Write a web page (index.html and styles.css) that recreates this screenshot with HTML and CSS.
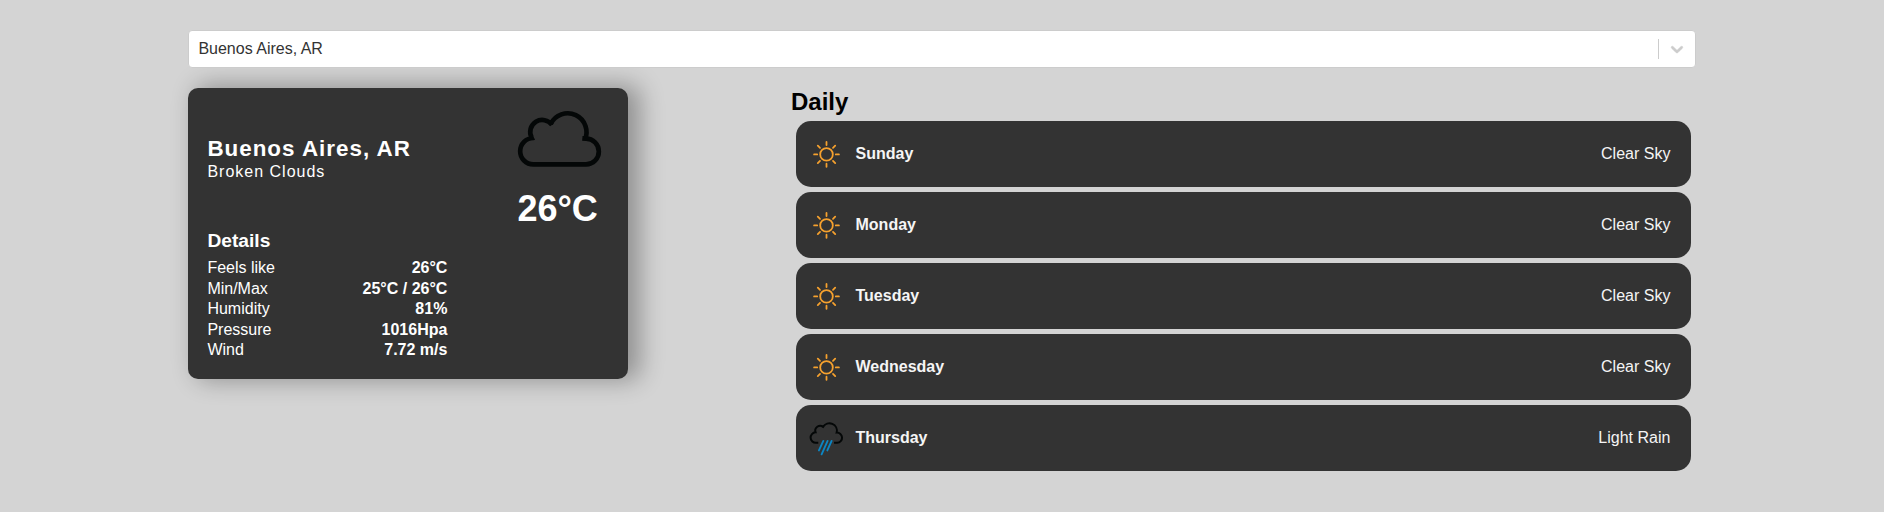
FILE: index.html
```html
<!DOCTYPE html>
<html lang="en">
<head>
<meta charset="utf-8">
<title>Weather</title>
<link rel="stylesheet" href="styles.css">
</head>
<body>
<svg class="defs" width="0" height="0">
  <symbol id="sun" viewBox="0 0 50 50">
    <g fill="none" stroke="#f6a12e" stroke-width="1.8" stroke-linecap="round">
      <circle cx="25.5" cy="25.4" r="6.3"/>
      <path d="M25.5 13v3.1M25.5 34.7v3.1M13.1 25.4h3.1M34.8 25.4h3.1M16.8 16.7l2.2 2.2M32 31.9l2.2 2.2M16.8 34.1l2.2-2.2M32 18.9l2.2-2.2"/>
    </g>
  </symbol>
  <symbol id="rain" viewBox="46.5 59 375 375">
    <path d="M176 283H160A39.5 39.5 0 0 1 156 204A36 36 0 0 1 212 163A56 56 0 0 1 314 206A38.5 38.5 0 0 1 318 283H294" fill="none" stroke="#040707" stroke-width="15"/>
    <path d="M214 268L181 340M246 268L201 369M276 268L244 340" fill="none" stroke="#0c86c4" stroke-width="14" stroke-linecap="round"/>
  </symbol>
</svg>
<main class="page">
  <div class="select">
    <span class="select-value">Buenos Aires, AR</span>
    <span class="select-separator"></span>
    <span class="select-arrow">
      <svg width="20" height="20" viewBox="0 0 20 20"><path fill="#ccc" stroke="#ccc" stroke-width=".5" d="M4.516 7.548c0.436-0.446 1.043-0.481 1.576 0l3.908 3.747 3.908-3.747c0.533-0.481 1.141-0.446 1.574 0 0.436 0.445 0.408 1.197 0 1.615-0.406 0.418-4.695 4.502-4.695 4.502-0.217 0.223-0.502 0.335-0.787 0.335s-0.57-0.112-0.789-0.335c0 0-4.287-4.084-4.695-4.502s-0.436-1.17 0-1.615z"/></svg>
    </span>
  </div>
  <div class="columns">
    <section class="weather">
      <div class="top">
        <div>
          <p class="city">Buenos Aires, AR</p>
          <p class="description">Broken Clouds</p>
        </div>
        <svg class="cloud" viewBox="108 118 261 180"><path d="M160 284H318A38.5 38.5 0 0 0 318 207L307 206M314 212A56 56 0 1 0 212 163M216 166A36 36 0 0 0 155 204M162 204L160 205A39.5 39.5 0 0 0 160 284" fill="none" stroke="#040707" stroke-width="14"/></svg>
      </div>
      <p class="temperature">26°C</p>
      <div class="details">
        <p class="details-title">Details</p>
        <div class="row"><span>Feels like</span><b>26°C</b></div>
        <div class="row"><span>Min/Max</span><b>25°C / 26°C</b></div>
        <div class="row"><span>Humidity</span><b>81%</b></div>
        <div class="row"><span>Pressure</span><b>1016Hpa</b></div>
        <div class="row"><span>Wind</span><b>7.72 m/s</b></div>
      </div>
    </section>
    <section class="daily">
      <h2 class="title">Daily</h2>
      <div class="item"><svg class="icon"><use href="#sun"/></svg><span class="day">Sunday</span><span class="sky">Clear Sky</span></div>
      <div class="item"><svg class="icon"><use href="#sun"/></svg><span class="day">Monday</span><span class="sky">Clear Sky</span></div>
      <div class="item"><svg class="icon"><use href="#sun"/></svg><span class="day">Tuesday</span><span class="sky">Clear Sky</span></div>
      <div class="item"><svg class="icon"><use href="#sun"/></svg><span class="day">Wednesday</span><span class="sky">Clear Sky</span></div>
      <div class="item"><svg class="icon"><use href="#rain"/></svg><span class="day">Thursday</span><span class="sky">Light Rain</span></div>
    </section>
  </div>
</main>
</body>
</html>
```
FILE: styles.css
```css
* { box-sizing: border-box; }
body {
  margin: 0;
  min-height: 512px;
  background: #d4d4d4;
  font: 16px/20.5px "Liberation Sans", Arial, sans-serif;
}
p, h2 { margin: 0; }
.defs { display: block; }
.page { width: 1508px; margin: 0 auto; padding-top: 30px; }
.select {
  position: relative;
  z-index: 1;
  display: flex;
  align-items: center;
  height: 38px;
  background: #fff;
  border: 1px solid #ccc;
  border-radius: 4px;
  color: #333;
}
.select-value { flex: 1; padding-left: 9.4px; }
.select-separator { width: 1px; height: 20px; background: #ccc; }
.select-arrow { display: flex; padding: 8px; }
.columns { display: flex; align-items: flex-start; padding-top: 20px; }
.weather {
  width: 440px;
  height: 291px;
  margin-right: 163px;
  padding: 20px 20px 0 19.4px;
  border-radius: 10px;
  background: #333;
  color: #fff;
  box-shadow: 10px -1px 25px 2px rgba(0, 0, 0, .32);
}
.top { display: flex; justify-content: space-between; height: 78px; }
.city { margin-top: 29px; font-size: 22.4px; line-height: 24px; font-weight: 700; letter-spacing: 1px; }
.description { line-height: 22px; letter-spacing: 1px; }
.cloud { width: 87px; height: 60px; margin: 1px 5px 0 0; }
.temperature { padding-left: 310px; font-size: 36px; line-height: 46px; font-weight: 700; }
.details { width: 240px; }
.details-title { margin-bottom: 8px; font-size: 19.2px; line-height: 18px; font-weight: 700; }
.row { display: flex; justify-content: space-between; }
.daily { flex: 1; }
.title { height: 33px; font-size: 24px; line-height: 28px; }
.item {
  display: flex;
  align-items: center;
  height: 66px;
  margin: 0 5px 5px;
  padding: 0 20.6px 0 5px;
  border-radius: 15px;
  background: #333;
  color: #f5f5f5;
}
.icon { width: 50px; height: 50px; }
.day { flex: 1; margin-left: 4.5px; font-weight: 700; }
```
